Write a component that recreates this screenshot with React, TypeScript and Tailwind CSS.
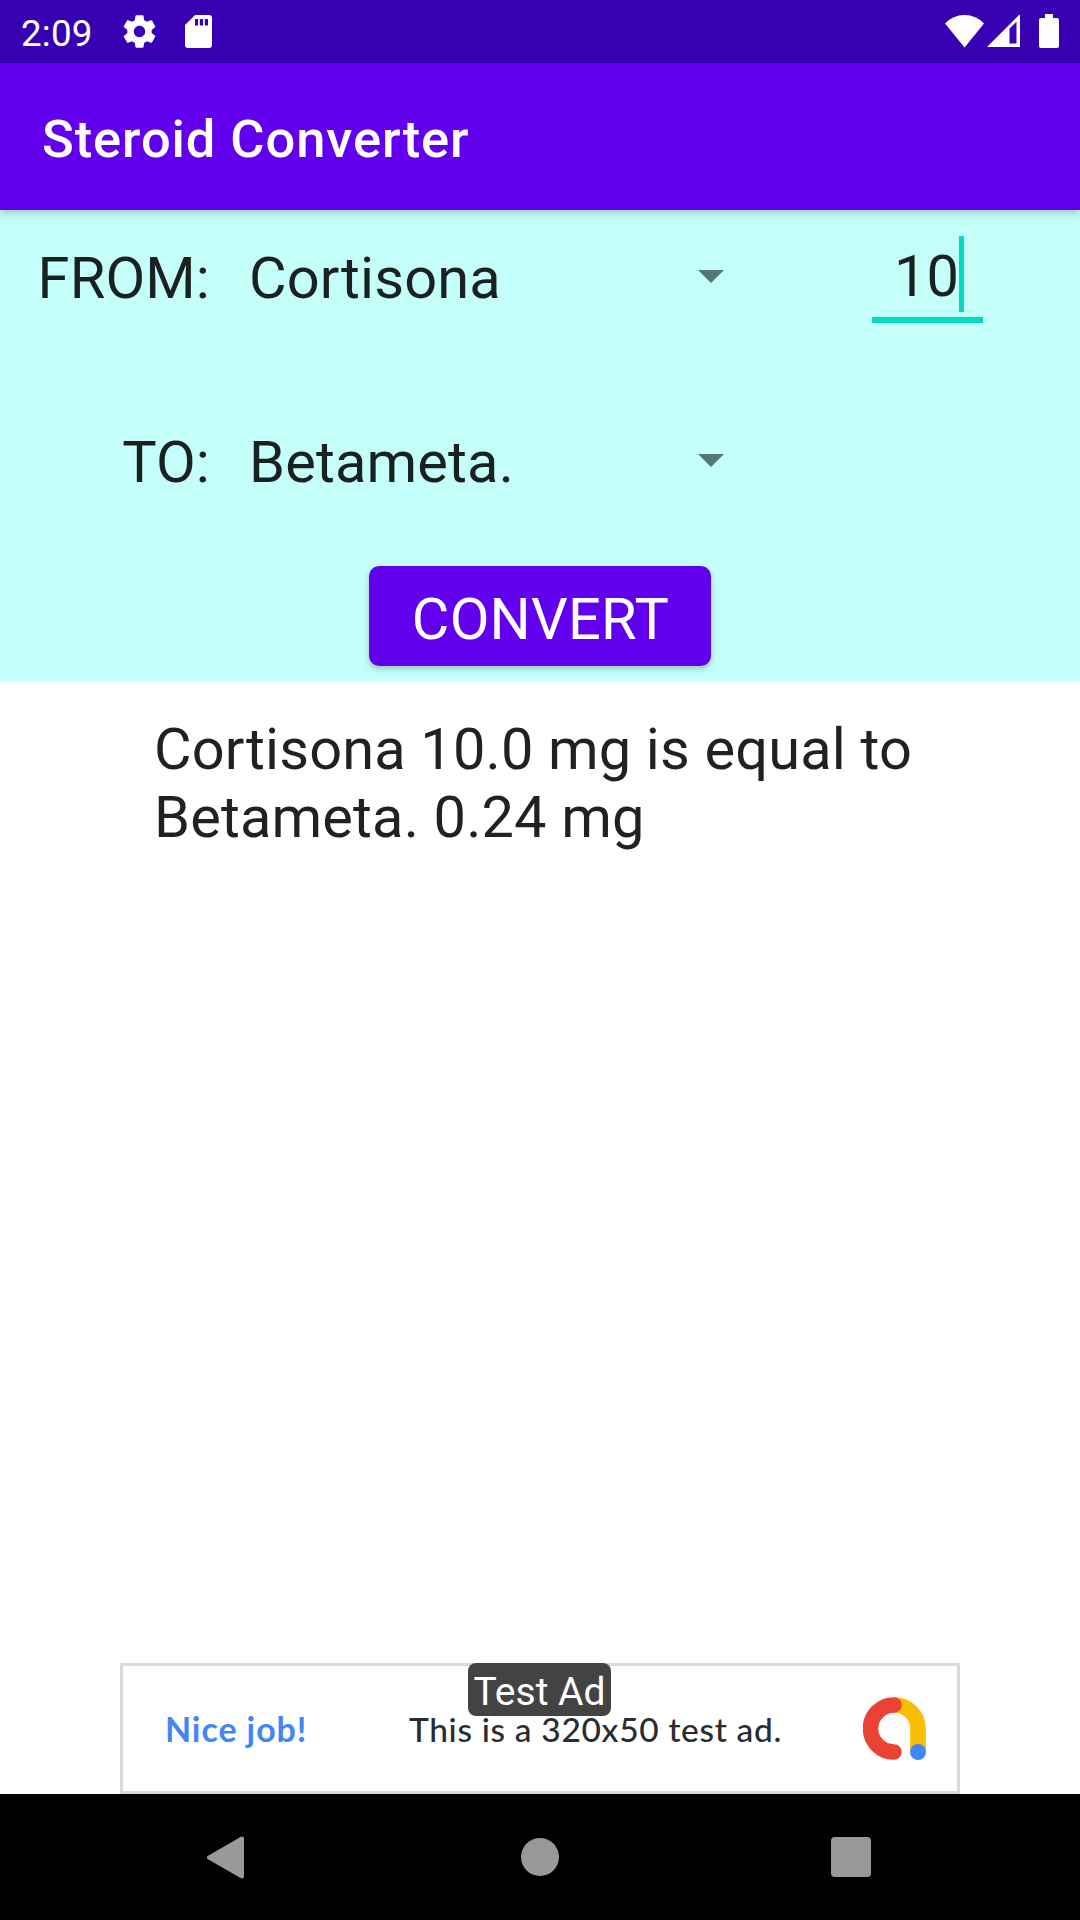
import React from "react";

function GearIcon() {
  return (
    <svg className="ml-[27px] h-[39px] w-[39px]" viewBox="0 0 24 24" fill="#fff">
      <path d="M19.43 12.98c.04-.32.07-.64.07-.98s-.03-.66-.07-.98l2.11-1.65c.19-.15.24-.42.12-.64l-2-3.46c-.12-.22-.39-.3-.61-.22l-2.49 1c-.52-.4-1.08-.73-1.69-.98l-.38-2.65C14.46 2.18 14.25 2 14 2h-4c-.25 0-.46.18-.49.42l-.38 2.65c-.61.25-1.17.59-1.69.98l-2.49-1c-.23-.09-.49 0-.61.22l-2 3.46c-.13.22-.07.49.12.64l2.11 1.65c-.04.32-.07.65-.07.98s.03.66.07.98l-2.11 1.65c-.19.15-.24.42-.12.64l2 3.46c.12.22.39.3.61.22l2.49-1c.52.4 1.08.73 1.69.98l.38 2.65c.03.24.24.42.49.42h4c.25 0 .46-.18.49-.42l.38-2.65c.61-.25 1.17-.59 1.69-.98l2.49 1c.23.09.49 0 .61-.22l2-3.46c.12-.22.07-.49-.12-.64l-2.11-1.65zM12 15.5c-1.93 0-3.5-1.57-3.5-3.5s1.57-3.5 3.5-3.5 3.5 1.57 3.5 3.5-1.57 3.5-3.5 3.5z" />
    </svg>
  );
}

function SdCardIcon() {
  return (
    <svg className="ml-[26px] h-[33px] w-[27px]" viewBox="0 0 27 33" fill="#fff">
      <path
        fillRule="evenodd"
        d="M10 0H24a3 3 0 0 1 3 3V30a3 3 0 0 1-3 3H3a3 3 0 0 1-3-3V10ZM10 4V10.5H13V4ZM14.8 4V10.5H18V4ZM19.8 4V10.5H23V4Z"
      />
    </svg>
  );
}

function StatusBar() {
  return (
    <div className="flex h-[63px] items-center bg-[#3700b3] pl-[21px] pr-[21px]">
      <span className="pt-[3px] text-[36.75px] leading-[63px] tracking-[0.005em] text-white">2:09</span>
      <GearIcon />
      <SdCardIcon />
      <svg className="ml-auto h-[33px] w-[39px]" viewBox="0 0 39 33" fill="#fff">
        <path d="M0 8.5Q8 0 19.5 0T39 8.5L19.5 32.5Z" />
      </svg>
      <svg className="ml-[3px] h-[33px] w-[33px]" viewBox="0 0 33 33" fill="#fff">
        <path fillRule="evenodd" d="M0 32L33 -1V32ZM22.5 13.5V28.5H29.5V6.7Z" />
      </svg>
      <svg className="ml-[19px] h-[35px] w-[20px]" viewBox="0 0 20 35" fill="#fff">
        <path d="M6 0H14V4H18a2 2 0 0 1 2 2V32a2 2 0 0 1-2 2H2a2 2 0 0 1-2-2V6a2 2 0 0 1 2-2H6Z" />
      </svg>
    </div>
  );
}

function Field({ label, value, children }: { label: string; value: string; children?: React.ReactNode }) {
  return (
    <div className="flex h-[134px] items-center">
      <div className="w-[210px] pt-[2px] text-right text-[57.75px] leading-[68px] tracking-[0.15px]">{label}</div>
      <div className="ml-[39px] flex w-[475px] items-center justify-between">
        <span className="pt-[2px] text-[57.75px] leading-[68px] tracking-[0.15px]">{value}</span>
        <svg className="mb-[2px] h-[13px] w-[26px]" viewBox="0 0 26 13" fill="#557773">
          <path d="M0 0H26L13 13Z" />
        </svg>
      </div>
      {children}
    </div>
  );
}

function AdBanner() {
  return (
    <div className="relative mx-auto flex h-[131px] w-[840px] items-center border-[3px] border-[#d5dcde] bg-white font-[Lato,sans-serif]">
      <span className="ml-[42px] w-[244px] whitespace-nowrap text-[34px] font-bold leading-[40px] tracking-[0.9px] text-[#4285f4]">Nice job!</span>
      <span className="whitespace-nowrap text-[33.5px] font-medium leading-[40px] tracking-[0.65px] text-[#2b2c30]">This is a 320x50 test ad.</span>
      <svg className="ml-auto mr-[31px] h-[63px] w-[63px]" viewBox="0 0 63 63" fill="none" strokeWidth="15.6" strokeLinecap="round">
        <path d="M31 8A23.5 23.5 0 0 1 55 31.5V55" stroke="#fbbc04" strokeLinecap="butt" />
        <path d="M31 8A23.5 23.5 0 0 0 31 55" stroke="#ea4335" />
        <circle cx="55" cy="55" r="8" fill="#4285f4" />
      </svg>
      <div className="absolute left-[345px] top-[-3px] flex h-[53px] w-[143px] items-center justify-center rounded-[8px] bg-[#434343] pt-[4px] font-[Roboto,sans-serif] text-[39px] leading-[46px] text-white">
        Test Ad
      </div>
    </div>
  );
}

export default function App() {
  return (
    <div className="flex h-[1920px] w-[1080px] flex-col overflow-hidden bg-white font-[Roboto,sans-serif] text-black/87">
      <StatusBar />
      <header className="z-10 flex h-[147px] items-center bg-[#6200ee] pl-[42px] shadow-[0_3px_9px_rgba(0,0,0,0.22)]">
        <h1 className="pt-[4px] text-[52.5px] font-medium leading-[62px] tracking-[0.9px] text-white">Steroid Converter</h1>
      </header>

      <main className="h-[471px] bg-[#c4fff9]">
        <Field label="FROM:" value="Cortisona">
          <div className="relative ml-[148px] mt-[-2px] h-[93px] w-[111px] border-b-[6px] border-[#03dac5] pl-[22px] pt-[12px] text-[57.75px] leading-[68px] tracking-[0.15px]">
            10
            <div className="absolute left-[87px] top-[6px] h-[76px] w-[5px] bg-[#03dac5]" />
          </div>
        </Field>
        <div className="h-[50px]" />
        <Field label="TO:" value="Betameta." />
        <button className="mx-auto mt-[38px] flex h-[100px] w-[342px] items-center justify-center rounded-[10px] bg-[#6200ee] pl-[1px] pt-[5px] text-[57.75px] leading-[68px] tracking-[0.2px] text-white shadow-[0_3px_6px_rgba(0,0,0,0.22)]">
          CONVERT
        </button>
      </main>

      <p className="ml-[154px] mt-[34px] w-[780px] text-[57.75px] leading-[68px] tracking-[0.15px]">
        Cortisona 10.0 mg is equal to Betameta. 0.24 mg
      </p>

      <div className="mt-auto">
        <AdBanner />
      </div>
      <nav className="flex h-[126px] items-center bg-black">
        <svg className="ml-[206px] h-[43px] w-[38px]" viewBox="0 0 38 43" fill="#999" stroke="#999" strokeWidth="4" strokeLinejoin="round">
          <path d="M3 21.5L36 2.5V40.5Z" />
        </svg>
        <div className="ml-[277px] h-[38px] w-[38px] rounded-full bg-[#999]" />
        <div className="ml-[272px] h-[40px] w-[40px] rounded-[4px] bg-[#999]" />
      </nav>
    </div>
  );
}
